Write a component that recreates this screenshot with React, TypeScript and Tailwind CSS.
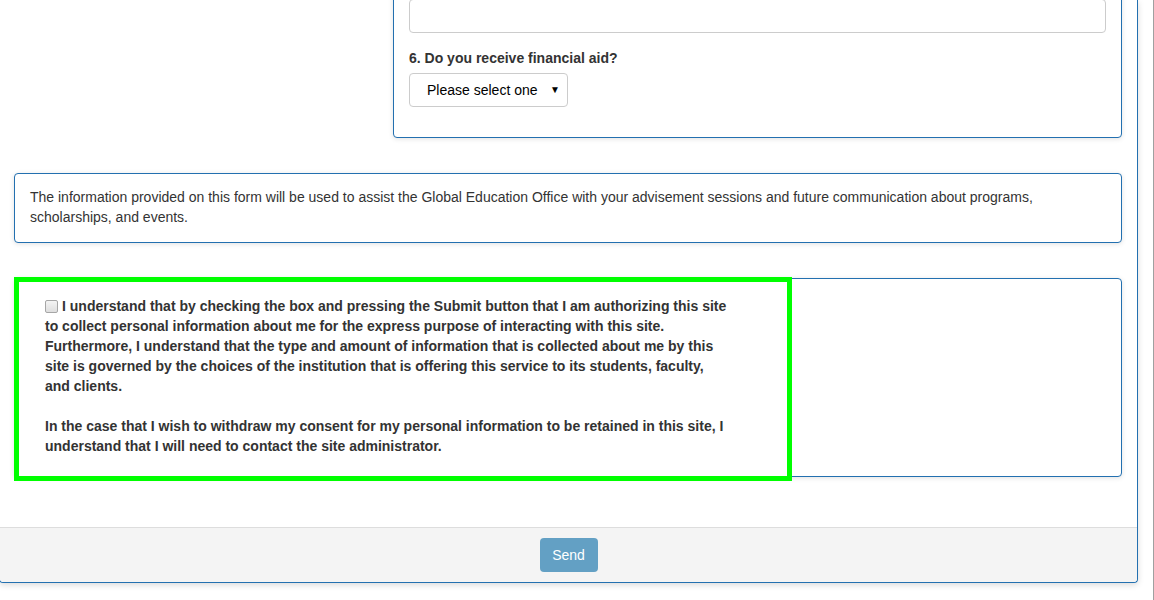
import React from 'react';

const font = { fontFamily: '"Liberation Sans", Arial, sans-serif' };

const Card: React.FC<{ className?: string; children?: React.ReactNode }> = ({ className = '', children }) => (
  <div
    className={`relative rounded-[4px] border border-[#2370b0] bg-white shadow-[0_1px_5px_rgba(0,0,0,0.12)] ${className}`}
  >
    {children}
  </div>
);

const App: React.FC = () => {
  return (
    <div className="flex h-[600px] items-start overflow-hidden bg-white text-[14px] leading-[20px] text-[#333]" style={font}>
      <div className="-ml-px flex w-[1139px] shrink-0 flex-col rounded-b-[4px] border-r border-b border-l border-[#2370b0] shadow-[0_2px_6px_rgba(0,0,0,0.15)]">
        <div className="flex flex-col pt-0 pr-[15px] pb-[50px] pl-[14px]">
          {/* question card */}
          <div className="flex justify-end">
            <Card className="-mt-[17px] w-[729px] px-[15px] pt-[15px] pb-[30px]">
              <div className="h-[34px] rounded-[4px] border border-[#ccc] bg-white" />
              <label className="mt-[15px] block font-bold">6. Do you receive financial aid?</label>
              <div className="relative mt-[5px] w-[159px]">
                <select className="h-[34px] w-full appearance-none rounded-[4px] border border-[#ccc] bg-white pl-[17px] text-[14px] text-black">
                  <option>Please select one</option>
                </select>
                <span className="pointer-events-none absolute top-[7px] right-[8px] text-[10px] text-black">▼</span>
              </div>
            </Card>
          </div>

          {/* info card */}
          <Card className="mt-[35px] px-[15px] pt-[13px] pb-[15px]">
            <p>
              The information provided on this form will be used to assist the Global Education Office with your
              advisement sessions and future communication about programs, scholarships, and events.
            </p>
          </Card>

          {/* consent card */}
          <Card className="mt-[35px] pt-[17px] pr-[15px] pb-[20px] pl-[30px]">
            <div className="max-w-[686px] font-bold">
              <p>
                <span className="mr-[4px] inline-block h-[13px] w-[13px] translate-y-[1px] rounded-[2px] border border-[#a6a6a6] bg-gradient-to-b from-[#f4f4f4] to-[#dedede] align-[-1px]" />
                I understand that by checking the box and pressing the Submit button that I am authorizing this site to
                collect personal information about me for the express purpose of interacting with this site.
                Furthermore, I understand that the type and amount of information that is collected about me by this
                site is governed by the choices of the institution that is offering this service to its students,
                faculty, and clients.
              </p>
              <p className="mt-[20px]">
                In the case that I wish to withdraw my consent for my personal information to be retained in this site,
                I understand that I will need to contact the site administrator.
              </p>
            </div>
            <div className="pointer-events-none absolute -top-[2px] -left-px h-[204px] w-[778px] border-[5px] border-[#00ff00]" />
          </Card>
        </div>

        {/* footer */}
        <div className="flex justify-center rounded-b-[4px] border-t border-[#ddd] bg-[#f4f4f4] py-[10px]">
          <button disabled className="h-[34px] w-[58px] rounded-[4px] bg-[#63a0c4] text-[14px] text-white">
            Send
          </button>
        </div>
      </div>
      <div className="flex-1" />
      <div className="h-full w-px bg-[#a0a0a0]" />
    </div>
  );
};

export default App;
